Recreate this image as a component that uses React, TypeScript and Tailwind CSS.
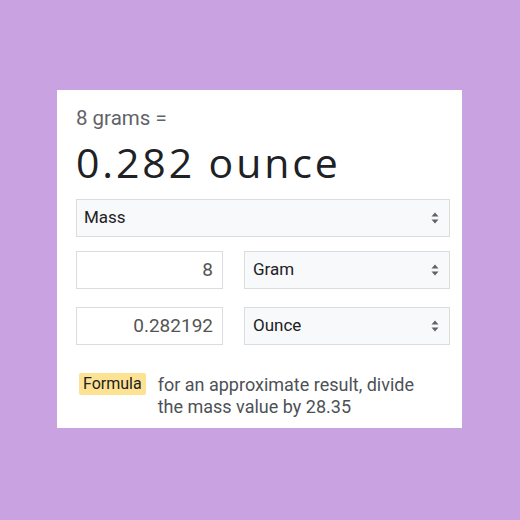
import React from "react";

const Arrows = () => (
  <svg width="8" height="12" viewBox="0 0 8 12" className="shrink-0">
    <path d="M4 0.5 L7.5 4.5 L0.5 4.5 Z" fill="#5f6368" />
    <path d="M4 11.5 L7.5 7.5 L0.5 7.5 Z" fill="#5f6368" />
  </svg>
);

const Select = ({ label, className }: { label: string; className?: string }) => (
  <div
    className={
      "flex items-center justify-between h-[38px] border border-[#dadce0] bg-[#f8f9fa] pl-[7px] pr-[10px] text-[17px] text-[#202124] " +
      (className ?? "")
    }
  >
    <span>{label}</span>
    <Arrows />
  </div>
);

const Input = ({ value }: { value: string }) => (
  <div className="flex items-center justify-end h-[38px] w-[147px] border border-[#dadce0] bg-white pr-[9px] text-[19px] text-[#555555]">
    {value}
  </div>
);

export default function App() {
  return (
    <div
      className="w-[520px] h-[520px] bg-[#c9a2e2] pt-[90px] pl-[57px]"
      style={{ fontFamily: "Roboto, 'Noto Sans', sans-serif" }}
    >
      <div className="w-[405px] h-[338px] bg-white pl-[19px] pr-[12px] pt-[16px]">
        <div className="text-[20.5px] leading-[24px] text-[#5f6368]">8 grams =</div>
        <div
          className="mt-[8px] text-[41px] leading-[49px] tracking-[2.9px] text-[#202124]"
          style={{ fontFamily: "'Open Sans', Roboto, sans-serif" }}
        >
          0.282 ounce
        </div>
        <Select label="Mass" className="mt-[12px]" />
        <div className="mt-[14px] flex gap-[21px]">
          <Input value="8" />
          <Select label="Gram" className="flex-1 pl-[8px]" />
        </div>
        <div className="mt-[18px] flex gap-[21px]">
          <Input value="0.282192" />
          <Select label="Ounce" className="flex-1 pl-[8px]" />
        </div>
        <div className="mt-[29px] flex items-start">
          <div className="ml-[3px] mt-[-1px] bg-[#fde293] px-[4px] h-[22px] flex items-center text-[16px] text-[#202124] rounded-[2px]">
            Formula
          </div>
          <div className="ml-[12px] text-[18px] leading-[22px] text-[#4d5156]">
            for an approximate result, divide
            <br />
            the mass value by 28.35
          </div>
        </div>
      </div>
    </div>
  );
}
